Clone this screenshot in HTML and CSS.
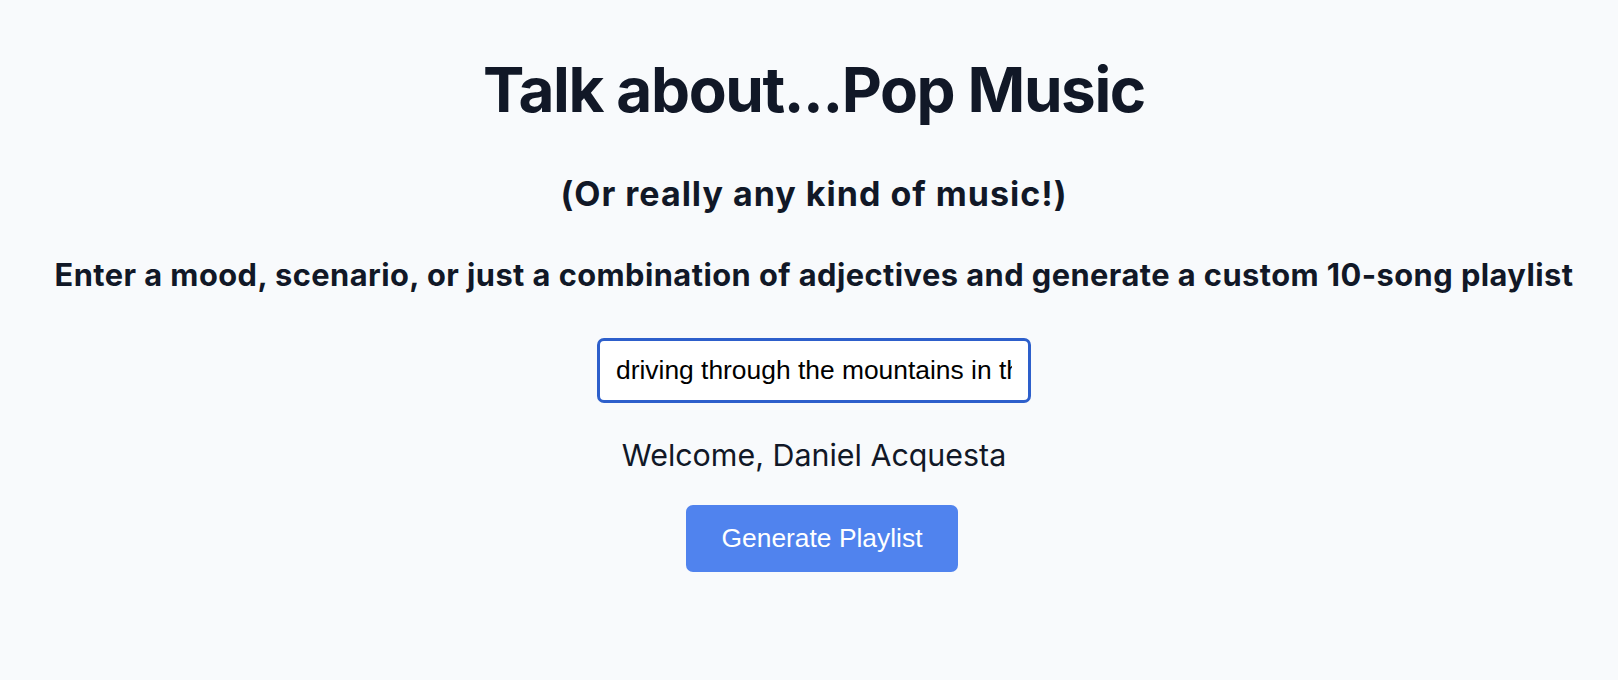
FILE: index.html
```html
<!DOCTYPE html>
<html lang="en">
<head>
<meta charset="utf-8">
<title>Talk about...Pop Music</title>
<link rel="stylesheet" href="styles.css">
</head>
<body>
<main class="page">
  <h1 class="title">Talk about...Pop Music</h1>
  <h2 class="subtitle">(Or really any kind of music!)</h2>
  <p class="lead">Enter a mood, scenario, or just a combination of adjectives and generate a custom 10-song playlist</p>
  <input class="prompt" type="text" value="driving through the mountains in the fall">
  <p class="welcome">Welcome, Daniel Acquesta</p>
  <button class="generate" type="button">Generate Playlist</button>
</main>
</body>
</html>
```

FILE: styles.css
```css
html, body {
  margin: 0;
  padding: 0;
  background: #f8fafc;
}

body {
  font-family: Inter, "Noto Sans", sans-serif;
  color: #111827;
}

.page {
  display: flex;
  flex-direction: column;
  align-items: center;
  padding: 59px 0 0 10px;
  min-height: 680px;
  box-sizing: border-box;
}

.title {
  margin: 0;
  font-size: 62px;
  line-height: 62px;
  font-weight: 700;
  letter-spacing: -1.4px;
}

.subtitle {
  margin: 53px 0 0;
  font-size: 34px;
  line-height: 40px;
  font-weight: 700;
  letter-spacing: 1px;
}

.lead {
  margin: 43px 0 0;
  font-size: 30.8px;
  line-height: 36px;
  font-weight: 700;
  letter-spacing: 0.45px;
  white-space: nowrap;
}

.prompt {
  margin: 44.5px 0 0;
  width: 434px;
  height: 65px;
  box-sizing: border-box;
  border: 3px solid #2d5fcb;
  border-radius: 7px;
  padding: 0 16px;
  background: #ffffff;
  font-family: "Liberation Sans", Arial, sans-serif;
  font-size: 26.4px;
  color: #000000;
  outline: none;
}

.welcome {
  margin: 34.7px 0 0;
  font-size: 30.4px;
  line-height: 36px;
  font-weight: 400;
}

.generate {
  margin: 32.3px 0 0 16px;
  width: 272px;
  height: 67px;
  border: none;
  border-radius: 7px;
  background: #5083ee;
  color: #ffffff;
  font-family: "Liberation Sans", Arial, sans-serif;
  font-size: 26.4px;
  cursor: pointer;
}
```
